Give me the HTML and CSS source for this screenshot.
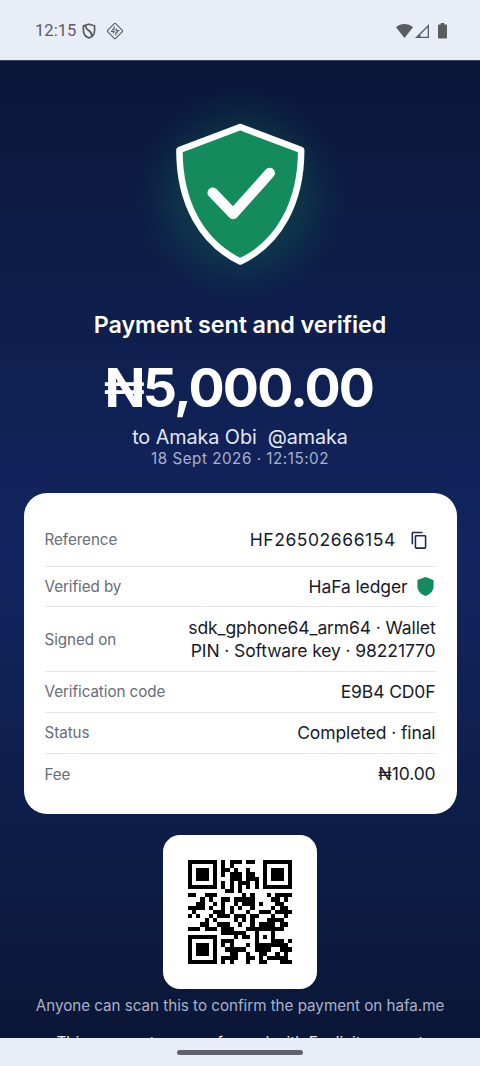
FILE: index.html
```html
<!DOCTYPE html>
<html lang="en">
<head>
<meta charset="utf-8">
<title>Payment receipt</title>
<link rel="stylesheet" href="styles.css">
</head>
<body>
<div class="phone">
  <header class="status-bar">
    <span class="clock">12:15</span>
    <svg class="ic-guard" viewBox="0 0 14 16"><path d="M7 1.2 L12.6 2.8 V7.5 C12.6 11.3 10.2 13.8 7 15 C3.8 13.8 1.4 11.3 1.4 7.5 V2.8 Z M3.6 2.4 C3.6 8.4 10.2 6.5 9.9 13"/></svg>
    <svg class="ic-diamond" viewBox="0 0 18 18"><rect x="3.3" y="3.3" width="11.4" height="11.4" rx="1" transform="rotate(45 9 9)"/><path d="M8.200 4.600v2.600h-1.800M4.800 9.400h2.600v2.200M13.200 8.600h-2.800v-2.200M9.800 13.400v-2.600h1.800M7.600 8.800l1 1M9.600 7.800l1 1M6.200 8l.8-.8M11 10l.8-.8"/></svg>
    <span class="grow"></span>
    <svg class="ic-wifi" viewBox="0 0 17 14"><path d="M0 3.2 C4.8 -1 12.2 -1 17 3.2 L8.5 14 Z"/></svg>
    <svg class="ic-signal" viewBox="0 0 14 14"><path fill-rule="evenodd" d="M14 0V14H0Z M12.7 3.2 V12.7 H5.500 V10.400Z"/></svg>
    <svg class="ic-battery" viewBox="0 0 9 16"><path d="M2.7 0h3.6v1.5H8a1 1 0 0 1 1 1V14.6a1 1 0 0 1-1 1H1a1 1 0 0 1-1-1V2.5a1 1 0 0 1 1-1h1.700Z"/></svg>
  </header>

  <main class="receipt">
    <svg class="hero" viewBox="130 85 220 220">
      <defs>
        <radialGradient id="glow">
          <stop offset="0" stop-color="#138b5d" stop-opacity=".36"/>
          <stop offset=".6" stop-color="#138b5d" stop-opacity=".2"/>
          <stop offset=".8" stop-color="#138b5d" stop-opacity=".08"/>
          <stop offset="1" stop-color="#138b5d" stop-opacity="0"/>
        </radialGradient>
      </defs>
      <circle cx="240.300" cy="195" r="106" fill="url(#glow)"/>
      <path class="shield" d="M240.300 127 L301.200 150 C301.200 203 279 243 240.300 261.500 C201.600 243 179.400 203 179.400 150 Z"/>
      <path class="tick" d="M212.700 192.700 L233.100 213.900 L269.700 173"/>
    </svg>
    <h1 class="title">Payment sent and verified</h1>
    <p class="amount">₦5,000.00</p>
    <p class="payee">to Amaka Obi&nbsp; @amaka</p>
    <p class="date">18 Sept 2026 · 12:15:02</p>

    <dl class="card">
      <div class="row row-ref"><dt>Reference</dt><dd class="ref">HF26502666154</dd>
        <svg class="ic-copy" viewBox="0 0 24 24"><path d="M16 1H4c-1.100 0-2 .9-2 2v14h2V3h12V1zm3 4H8c-1.100 0-2 .9-2 2v14c0 1.100.9 2 2 2h11c1.100 0 2-.9 2-2V7c0-1.100-.9-2-2-2zm0 16H8V7h11v14z"/></svg></div>
      <div class="row"><dt>Verified by</dt><dd>HaFa ledger</dd>
        <svg class="ic-shield" viewBox="0 0 17 19"><path d="M8.500 0 L16.600 3 V9 C16.600 13.800 13 17.500 8.500 19 C4 17.500 .4 13.800 .4 9 V3 Z"/></svg></div>
      <div class="row row-signed"><dt>Signed on</dt><dd>sdk_gphone64_arm64 · Wallet<br>PIN · Software key · 98221770</dd></div>
      <div class="row"><dt>Verification code</dt><dd>E9B4 CD0F</dd></div>
      <div class="row"><dt>Status</dt><dd>Completed · final</dd></div>
      <div class="row"><dt>Fee</dt><dd>₦10.00</dd></div>
    </dl>

    <div class="qr-card"><svg class="qr" id="qr" viewBox="0 0 25 25" shape-rendering="crispEdges"></svg></div>
    <p class="scan">Anyone can scan this to confirm the payment on hafa.me</p>
    <p class="note">This payment was performed with Explicit consent</p>
  </main>

  <footer class="nav-bar"><span class="handle"></span></footer>
</div>
<script src="qr.js"></script>
</body>
</html>
```

FILE: styles.css
```css
* { box-sizing: border-box; }
body { margin: 0; font-family: Inter, "Noto Sans", sans-serif; }
h1, p, dl, dd { margin: 0; }
svg { display: block; flex: none; }

.phone { width: 480px; height: 1066px; display: flex; flex-direction: column; overflow: hidden; background: #e9edf8; }

.status-bar { height: 60px; flex: none; display: flex; align-items: center; padding: 1px 33px 0 35px; background: #e9edf8; }
.status-bar svg { fill: #5b5c62; }
.clock { font: 16.600px/20px Roboto, sans-serif; color: #5b5c62; width: 47px; }
.status-bar .ic-guard { width: 14px; height: 16px; fill: none; stroke: #5b5c62; stroke-width: 1.700; }
.status-bar .ic-diamond { width: 18px; height: 18px; margin-left: 10px; fill: none; stroke: #5b5c62; stroke-width: 1.100; }
.grow { flex: 1; }
.ic-wifi { width: 17px; height: 14px; margin-right: 2px; }
.ic-signal { width: 14px; height: 14px; margin-right: 9px; }
.ic-battery { width: 9px; height: 16px; }

.receipt {
  height: 978px; flex: none; overflow: hidden;
  display: flex; flex-direction: column; align-items: center;
  padding-top: 24px;
  border-top: 1px solid #3a4463;
  background: linear-gradient(#0a1738, #122560 50%, #0a1736);
  color: #fff; text-align: center;
}
.hero { width: 220px; height: 220px; }
.shield { fill: #138b5d; stroke: #fff; stroke-width: 6.500; stroke-linejoin: round; }
.tick { fill: none; stroke: #fff; stroke-width: 10.500; stroke-linecap: round; stroke-linejoin: round; }

.title { margin-top: 5px; font-size: 23.300px; line-height: 30px; font-weight: 600; letter-spacing: -.05px; white-space: nowrap; }
.amount { margin-top: 16px; padding-right: 3px; font-size: 53.700px; line-height: 64px; font-weight: 700; letter-spacing: -1.850px; white-space: nowrap; }
.payee { margin-top: 5px; font-size: 19.800px; line-height: 24px; letter-spacing: -.07px; color: #e3e7f3; white-space: nowrap; }
.date { font-size: 15.200px; line-height: 20px; letter-spacing: .53px; color: #a9b1cb; white-space: nowrap; }

.card { width: 433px; height: 321px; flex: none; margin-top: 24px; padding: 21px; border-radius: 23px; background: #fff; text-align: left; }
.row { height: 40.800px; display: flex; align-items: center; border-bottom: 1px solid #e5e7eb; }
.row:last-child { border-bottom: 0; }
.row-ref { height: 52.700px; }
.row-signed { height: 64.600px; }
dt { flex: 1; padding-top: 1px; font-size: 15.200px; line-height: 20px; letter-spacing: -.06px; color: #666c7a; }
dd { font-size: 17.500px; line-height: 23.300px; letter-spacing: -.11px; color: #161a2b; text-align: right; white-space: nowrap; }
.ref { letter-spacing: .56px; }
.ic-copy { width: 18.700px; height: 18.700px; margin: 0 7px 0 14px; fill: #1a2858; }
.ic-shield { width: 17px; height: 19px; margin: 0 2px 0 9px; fill: #138b5d; }

.qr-card { width: 154px; height: 154px; flex: none; margin-top: 21px; display: grid; place-items: center; border-radius: 17px; background: #fff; }
.qr { width: 104px; height: 104px; }
.scan { margin-top: 7px; font-size: 15.200px; line-height: 20px; letter-spacing: -.02px; color: #a9b1cb; white-space: nowrap; }
.note { margin-top: 17px; font-size: 15.200px; line-height: 20px; letter-spacing: .1px; color: #e3e7f3; white-space: nowrap; }

.nav-bar { height: 28px; display: flex; justify-content: center; padding-top: 12px; background: #e9edf8; }
.handle { width: 126px; height: 4.500px; border-radius: 3px; background: #60616a; }
```

FILE: qr.js
```js
// Version 2-L QR code, byte mode: 25 x 25 modules, 34 data and 10 error-correction codewords.
const SIZE = 25;
const MASK = 4;

function mul(a, b) {
  let r = 0;
  for (let i = 7; i >= 0; i--) {
    r = (r << 1) ^ ((r >>> 7) * 0x11d);
    r ^= ((b >>> i) & 1) * a;
  }
  return r;
}

function codewords(text) {
  const bits = [];
  const push = (v, n) => { for (let i = n - 1; i >= 0; i--) bits.push((v >>> i) & 1); };
  push(4, 4);
  push(text.length, 8);
  for (const c of text) push(c.charCodeAt(0), 8);
  push(0, Math.min(4, 272 - bits.length));
  while (bits.length % 8) bits.push(0);
  const data = [];
  for (let i = 0; i < bits.length; i += 8) data.push(parseInt(bits.slice(i, i + 8).join(""), 2));
  for (let pad = 0xec; data.length < 34; pad ^= 0xec ^ 0x11) data.push(pad);

  const gen = new Array(10).fill(0);
  gen[9] = 1;
  let root = 1;
  for (let i = 0; i < 10; i++) {
    for (let j = 0; j < 10; j++) {
      gen[j] = mul(gen[j], root);
      if (j + 1 < 10) gen[j] ^= gen[j + 1];
    }
    root = mul(root, 2);
  }
  const ecc = new Array(10).fill(0);
  for (const b of data) {
    const f = b ^ ecc.shift();
    ecc.push(0);
    gen.forEach((g, i) => { ecc[i] ^= mul(g, f); });
  }
  return data.concat(ecc);
}

function build(words) {
  const m = Array.from({ length: SIZE }, () => new Array(SIZE).fill(0));
  const fixed = Array.from({ length: SIZE }, () => new Array(SIZE).fill(false));
  const set = (x, y, v) => {
    if (x < 0 || y < 0 || x >= SIZE || y >= SIZE) return;
    m[y][x] = v ? 1 : 0;
    fixed[y][x] = true;
  };
  // Timing lines, finders and the alignment square.
  for (let i = 0; i < SIZE; i++) { set(6, i, i % 2 === 0); set(i, 6, i % 2 === 0); }
  for (const [cx, cy] of [[3, 3], [SIZE - 4, 3], [3, SIZE - 4]])
    for (let dy = -4; dy <= 4; dy++)
      for (let dx = -4; dx <= 4; dx++) {
        const d = Math.max(Math.abs(dx), Math.abs(dy));
        set(cx + dx, cy + dy, d !== 2 && d !== 4);
      }
  for (let dy = -2; dy <= 2; dy++)
    for (let dx = -2; dx <= 2; dx++)
      set(18 + dx, 18 + dy, Math.max(Math.abs(dx), Math.abs(dy)) !== 1);

  // Format information, twice.
  const info = (1 << 3) | MASK;
  let rem = info;
  for (let i = 0; i < 10; i++) rem = (rem << 1) ^ ((rem >>> 9) * 0x537);
  const f = ((info << 10) | rem) ^ 0x5412;
  const bit = (i) => (f >>> i) & 1;
  for (let i = 0; i <= 5; i++) set(8, i, bit(i));
  set(8, 7, bit(6)); set(8, 8, bit(7)); set(7, 8, bit(8));
  for (let i = 9; i < 15; i++) set(14 - i, 8, bit(i));
  for (let i = 0; i < 8; i++) set(SIZE - 1 - i, 8, bit(i));
  for (let i = 8; i < 15; i++) set(8, SIZE - 15 + i, bit(i));
  set(8, SIZE - 8, 1);

  // Data in the two-column zigzag.
  let n = 0;
  for (let right = SIZE - 1; right >= 1; right -= 2) {
    if (right === 6) right = 5;
    for (let v = 0; v < SIZE; v++)
      for (let j = 0; j < 2; j++) {
        const x = right - j;
        const y = ((right + 1) & 2) === 0 ? SIZE - 1 - v : v;
        if (fixed[y][x]) continue;
        const b = n < words.length * 8 ? (words[n >>> 3] >>> (7 - (n & 7))) & 1 : 0;
        n++;
        m[y][x] = b ^ ((Math.floor(x / 3) + Math.floor(y / 2)) % 2 === 0 ? 1 : 0);
      }
  }
  return m;
}

let d = "";
build(codewords("https://hafa.me/v/HF26502666154")).forEach((row, y) =>
  row.forEach((v, x) => { if (v) d += `M${x} ${y}h1v1h-1z`; }));
const path = document.createElementNS("http://www.w3.org/2000/svg", "path");
path.setAttribute("d", d);
document.getElementById("qr").appendChild(path);
```
